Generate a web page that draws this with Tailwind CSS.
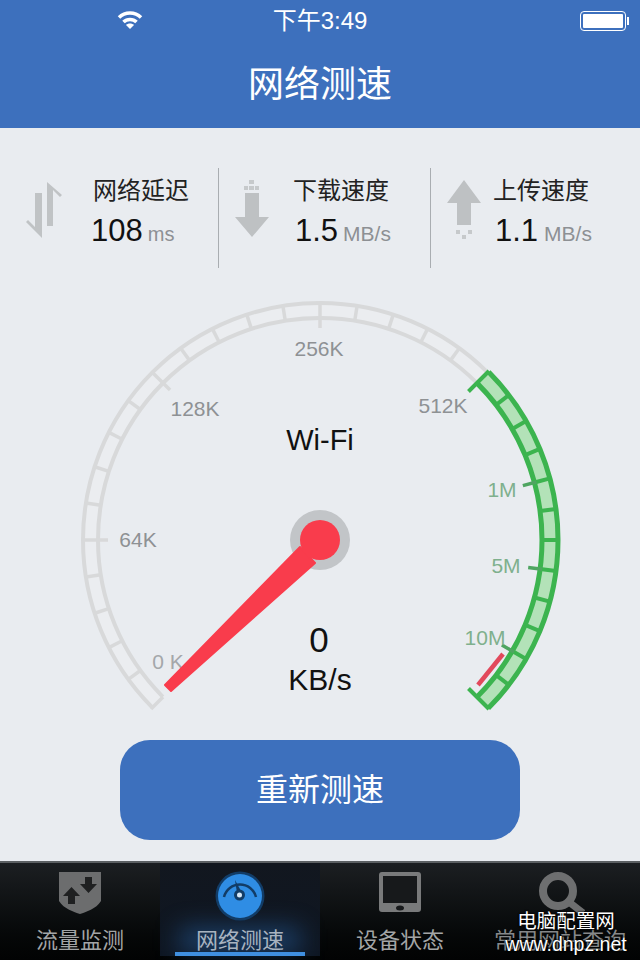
<!DOCTYPE html>
<html lang="zh">
<head>
    <meta charset="UTF-8"/>
    <meta content="width=device-width, initial-scale=1.0" name="viewport"/>
    <script src="https://cdn.jsdelivr.net/npm/@tailwindcss/browser@4"></script>
    <title>网络测速</title>
</head>
<body class="bg-[#e9ecf0] font-['Liberation_Sans','Noto_Sans_CJK_SC',sans-serif]">
<main class="relative w-[640px] h-[960px] overflow-hidden flex flex-col">

    <!-- header -->
    <header class="h-[128px] shrink-0 bg-[#3d70bd] text-white">
        <div class="h-[42px] flex items-center relative">
            <svg class="absolute left-[117px] top-[10px]" width="26" height="20" viewBox="0 0 26 20">
                <path d="M2 7.500 C8 1.500 18 1.500 24 7.500" fill="none" stroke="#fff" stroke-width="3.500"/>
                <path d="M6.500 12 C10 8.500 16 8.500 19.500 12" fill="none" stroke="#fff" stroke-width="3.500"/>
                <path d="M13 19 L9 15 C11 13 15 13 17 15 Z" fill="#fff"/>
            </svg>
            <span class="w-full text-center text-[24px] leading-none">下午3:49</span>
            <div class="absolute left-[580px] top-[11px] w-[46px] h-[20px] border-[1.5px] border-white rounded-[4px] p-[2px]">
                <div class="w-full h-full bg-white rounded-[1px]"></div>
            </div>
            <div class="absolute left-[627px] top-[17px] w-[2px] h-[8px] bg-white"></div>
        </div>
        <h1 class="text-center text-[36px] leading-[50px] mt-[18px]">网络测速</h1>
    </header>

    <!-- stats -->
    <section class="h-[100px] mt-[40px] shrink-0 flex">
        <div class="w-[219px] border-r border-[#a9adb1] flex">
            <svg class="ml-[26px] mt-[10px]" width="36" height="72" viewBox="0 0 36 72">
                <path d="M9 15 H16 V60 L0 44 L2 42 L9 49 Z" fill="#c0c3c5"/>
                <path d="M21 4 L36 17 L34 19 L27 12 V48 H21 Z" fill="#c0c3c5"/>
            </svg>
            <div class="ml-[31px]">
                <div class="pt-[9px] text-[24px] leading-[28px] text-[#222]">网络延迟</div>
                <div class="mt-[8px] -ml-[2px] flex items-baseline">
                    <span class="text-[31px] leading-[36px] text-[#111]">108</span>
                    <span class="ml-[5px] text-[20px] text-[#8d9094]">ms</span>
                </div>
            </div>
        </div>
        <div class="w-[212px] border-r border-[#a9adb1] flex">
            <svg class="ml-[15px] mt-[10px]" width="36" height="72" viewBox="0 0 36 72">
                <path d="M11 15 H25 V39 H35 L18 59 L1 39 H11 Z" fill="#bec1c3"/>
                <path d="M15 2 H20 V6 H15 Z M10 8 H14 V12 H10 Z M21 8 H25 V12 H21 Z M15 8 H20 V12 H15 Z" fill="#c6c9cb"/>
            </svg>
            <div class="ml-[23px]">
                <div class="pt-[9px] text-[24px] leading-[28px] text-[#222]">下载速度</div>
                <div class="mt-[8px] ml-[2px] flex items-baseline">
                    <span class="text-[31px] leading-[36px] text-[#111]">1.5</span>
                    <span class="ml-[5px] text-[21px] text-[#8d9094]">MB/s</span>
                </div>
            </div>
        </div>
        <div class="flex-1 flex">
            <svg class="ml-[15px] mt-[10px]" width="36" height="72" viewBox="0 0 36 72">
                <path d="M18 2 L35 25 H25 V47 H11 V25 H1 Z" fill="#bec1c3"/>
                <path d="M10 52 H14 V56 H10 Z M22 52 H26 V56 H22 Z M16 57 H20 V61 H16 Z" fill="#c6c9cb"/>
            </svg>
            <div class="ml-[11px]">
                <div class="pt-[9px] text-[24px] leading-[28px] text-[#222]">上传速度</div>
                <div class="mt-[8px] ml-[2px] flex items-baseline">
                    <span class="text-[31px] leading-[36px] text-[#111]">1.1</span>
                    <span class="ml-[6px] text-[21px] text-[#8d9094]">MB/s</span>
                </div>
            </div>
        </div>
    </section>

    <!-- gauge, centre 320 540 -->
    <svg class="shrink-0 mt-[20px]" width="640" height="452" viewBox="0 288 640 452" font-family="Liberation Sans, Noto Sans CJK SC, sans-serif">
        <g fill="none">
            <circle cx="320" cy="540" r="230" stroke="#ebedf0" stroke-width="15" stroke-dasharray="722.6 722.6" stroke-dashoffset="-541.9"/>
            <circle cx="320" cy="540" r="237" stroke="#d8d9da" stroke-width="4" stroke-dasharray="744.6 744.6" stroke-dashoffset="-558.5"/>
            <circle cx="320" cy="540" r="222" stroke="#d8d9da" stroke-width="4" stroke-dasharray="697.4 697.4" stroke-dashoffset="-523.1"/>
        </g>
        <g stroke="#d8d9da" stroke-width="3.5">
            <line x1="81" y1="540" x2="98" y2="540" transform="rotate(-45 320 540)"/>
            <line x1="83" y1="540" x2="98" y2="540" transform="rotate(-36 320 540)"/>
            <line x1="83" y1="540" x2="98" y2="540" transform="rotate(-27 320 540)"/>
            <line x1="83" y1="540" x2="98" y2="540" transform="rotate(-18 320 540)"/>
            <line x1="83" y1="540" x2="98" y2="540" transform="rotate(-9 320 540)"/>
            <line x1="83" y1="540" x2="108" y2="540"/>
            <line x1="83" y1="540" x2="98" y2="540" transform="rotate(9 320 540)"/>
            <line x1="83" y1="540" x2="98" y2="540" transform="rotate(18 320 540)"/>
            <line x1="83" y1="540" x2="98" y2="540" transform="rotate(27 320 540)"/>
            <line x1="83" y1="540" x2="98" y2="540" transform="rotate(36 320 540)"/>
            <line x1="83" y1="540" x2="108" y2="540" transform="rotate(45 320 540)"/>
            <line x1="83" y1="540" x2="98" y2="540" transform="rotate(54 320 540)"/>
            <line x1="83" y1="540" x2="98" y2="540" transform="rotate(63 320 540)"/>
            <line x1="83" y1="540" x2="98" y2="540" transform="rotate(72 320 540)"/>
            <line x1="83" y1="540" x2="98" y2="540" transform="rotate(81 320 540)"/>
            <line x1="83" y1="540" x2="108" y2="540" transform="rotate(90 320 540)"/>
            <line x1="83" y1="540" x2="98" y2="540" transform="rotate(99 320 540)"/>
            <line x1="83" y1="540" x2="98" y2="540" transform="rotate(108 320 540)"/>
            <line x1="83" y1="540" x2="98" y2="540" transform="rotate(117 320 540)"/>
            <line x1="83" y1="540" x2="98" y2="540" transform="rotate(126 320 540)"/>
        </g>
        <!-- green band -->
        <g fill="none">
            <circle cx="320" cy="540" r="230" stroke="#b3e2b8" stroke-width="15" stroke-dasharray="361.3 1083.9" stroke-dashoffset="180.6"/>
            <circle cx="320" cy="540" r="238" stroke="#3cb44f" stroke-width="5" stroke-dasharray="373.8 1121.6" stroke-dashoffset="186.9"/>
            <circle cx="320" cy="540" r="222" stroke="#3cb44f" stroke-width="5" stroke-dasharray="348.7 1046.2" stroke-dashoffset="174.4"/>
        </g>
        <g stroke="#3cb44f" stroke-width="4">
            <line x1="542" y1="540" x2="558" y2="540" transform="rotate(-37.5 320 540)"/>
            <line x1="542" y1="540" x2="558" y2="540" transform="rotate(-30 320 540)"/>
            <line x1="542" y1="540" x2="558" y2="540" transform="rotate(-22.5 320 540)"/>
            <line x1="542" y1="540" x2="558" y2="540" transform="rotate(-15 320 540)"/>
            <line x1="542" y1="540" x2="558" y2="540" transform="rotate(-7.5 320 540)"/>
            <line x1="542" y1="540" x2="558" y2="540"/>
            <line x1="542" y1="540" x2="558" y2="540" transform="rotate(7.5 320 540)"/>
            <line x1="542" y1="540" x2="558" y2="540" transform="rotate(15 320 540)"/>
            <line x1="542" y1="540" x2="558" y2="540" transform="rotate(22.5 320 540)"/>
            <line x1="542" y1="540" x2="558" y2="540" transform="rotate(30 320 540)"/>
            <line x1="542" y1="540" x2="558" y2="540" transform="rotate(37.5 320 540)"/>
            <line x1="530" y1="540" x2="559" y2="540" transform="rotate(-45 320 540)"/>
            <line x1="530" y1="540" x2="559" y2="540" transform="rotate(45 320 540)"/>
        </g>
        <g stroke="#4fa561" stroke-width="3.5">
            <line x1="530" y1="540" x2="544" y2="540" transform="rotate(-15 320 540)"/>
            <line x1="530" y1="540" x2="544" y2="540" transform="rotate(7.5 320 540)"/>
            <line x1="530" y1="540" x2="544" y2="540" transform="rotate(30 320 540)"/>
        </g>
        <!-- red limit mark -->
        <line x1="503" y1="654" x2="478" y2="685" stroke="#e2495c" stroke-width="4.5"/>
        <!-- labels -->
        <g font-size="21" fill="#8e9194">
            <text x="319" y="356" text-anchor="middle">256K</text>
            <text x="195" y="416" text-anchor="middle">128K</text>
            <text x="443" y="413" text-anchor="middle">512K</text>
            <text x="138" y="547" text-anchor="middle">64K</text>
            <text x="168" y="669" text-anchor="middle" fill="#a4a7aa">0 K</text>
        </g>
        <g font-size="21" fill="#7fb08d">
            <text x="502" y="497" text-anchor="middle">1M</text>
            <text x="506" y="573" text-anchor="middle">5M</text>
            <text x="485" y="645" text-anchor="middle">10M</text>
        </g>
        <text x="320" y="450" text-anchor="middle" font-size="29" fill="#111">Wi-Fi</text>
        <text x="319" y="652" text-anchor="middle" font-size="35" fill="#111">0</text>
        <text x="320" y="690" text-anchor="middle" font-size="30" fill="#111">KB/s</text>
        <!-- needle -->
        <circle cx="320" cy="540" r="30" fill="#c2c5c8"/>
        <path d="M165 685 L300 547 L315 563 L171 691 Z" fill="#f93c4c" stroke="#f93c4c" stroke-width="2" stroke-linejoin="round"/>
        <circle cx="320" cy="540" r="20" fill="#f93c4c"/>
    </svg>

    <!-- button -->
    <button class="shrink-0 mx-auto w-[400px] h-[100px] rounded-[30px] bg-[#3d70bd] text-white text-[32px]" type="button">
        重新测速
    </button>

    <!-- tab bar -->
    <nav class="absolute left-0 top-[861px] w-full h-[99px] border-t-2 border-[#5c6063] bg-linear-to-b from-[#1c1f22] to-[#020303] flex text-[22px] text-[#a3a5a6] text-center">
        <div class="w-[160px] pt-[8px]">
            <svg class="mx-auto" width="44" height="44" viewBox="0 0 44 44">
                <path d="M1 1 H43 V30 C38 38 28 41 22 43 C16 41 6 38 1 30 Z" fill="#6c6d6e"/>
                <path d="M27 6 H34 V13 H39 L30.500 22 L22 13 H27 Z" fill="#1f2021"/>
                <path d="M13.500 16 L22 25 H17 V33 H10 V25 H5 Z" fill="#1f2021"/>
            </svg>
            <div class="mt-[11px] leading-[30px]">流量监测</div>
        </div>
        <div class="w-[160px] h-[93px] pt-[8px] relative bg-linear-to-b from-[#12171f] to-[#0e1622]">
            <div class="absolute left-[20px] bottom-[4px] w-[120px] h-[24px] bg-[#2a6cb4]/50 blur-md"></div>
            <svg class="relative mx-auto" width="50" height="50" viewBox="0 0 50 50">
                <circle cx="25" cy="25" r="24.5" fill="#123c66"/>
                <circle cx="25" cy="25" r="22" fill="#2f8de4"/>
                <path d="M9 26 A16.5 16.5 0 0 1 41 26" fill="none" stroke="#123c66" stroke-width="2.5"/>
                <path d="M20 9 L26 20 L22 22 Z" fill="#123c66"/>
                <circle cx="24.5" cy="24" r="4" fill="#d7e8f7" stroke="#123c66" stroke-width="3"/>
            </svg>
            <div class="relative mt-[5px] leading-[30px] text-[#a8b3c0]">网络测速</div>
            <div class="absolute left-[15px] bottom-0 w-[130px] h-[4px] bg-[#3f8fe0]"></div>
        </div>
        <div class="w-[160px] pt-[8px]">
            <svg class="mx-auto" width="44" height="44" viewBox="0 0 44 44">
                <rect x="1" y="1" width="42" height="40" rx="3" fill="#797a7b"/>
                <rect x="5" y="5" width="34" height="27" fill="#17191b"/>
                <ellipse cx="22" cy="37" rx="4" ry="2.5" fill="#17191b"/>
            </svg>
            <div class="mt-[11px] leading-[30px]">设备状态</div>
        </div>
        <div class="w-[160px] pt-[8px] relative">
            <svg class="mx-auto" width="50" height="44" viewBox="0 0 50 44">
                <circle cx="23" cy="20" r="15" fill="none" stroke="#6e6f70" stroke-width="8"/>
                <path d="M34 31 L48 42" stroke="#6e6f70" stroke-width="7"/>
            </svg>
            <div class="mt-[11px] leading-[30px] whitespace-nowrap text-[#86888a]">常用网站查询</div>
        </div>
    </nav>

    <!-- watermark -->
    <div class="absolute left-[499px] top-[910px] w-[134px] text-center text-white text-[19.5px] leading-[23px] [text-shadow:0_0_2px_#000,0_0_2px_#000]">
        <div>电脑配置网</div>
        <div>www.dnpz.net</div>
    </div>
</main>
</body>
</html>
